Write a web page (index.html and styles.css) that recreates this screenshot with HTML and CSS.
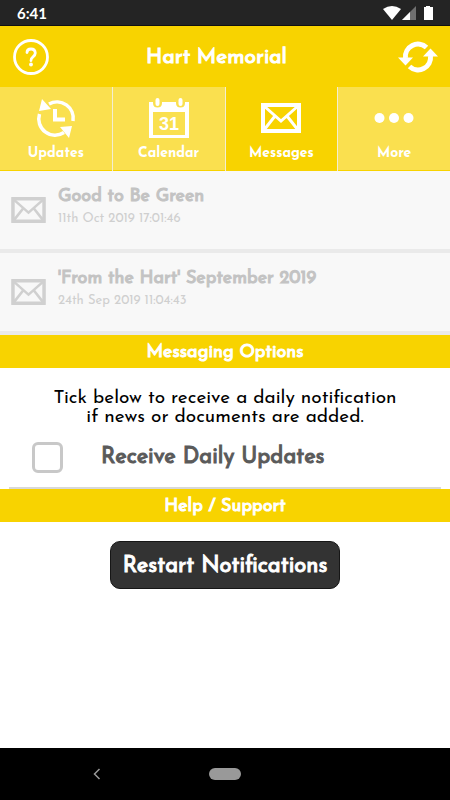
FILE: index.html
```html
<!DOCTYPE html>
<html lang="en">
<head>
<meta charset="utf-8">
<meta name="viewport" content="width=device-width, initial-scale=1">
<title>Hart Memorial</title>
<link rel="stylesheet" href="styles.css">
</head>
<body>
<svg class="defs" aria-hidden="true">
  <symbol id="envelope" viewBox="0 0 40 30">
    <path d="M2 2H38V28H2ZM3 3L20 18L37 3M3 27L14 13M37 27L26 13" fill="none" stroke="currentColor" stroke-width="3"/>
    <path d="M2 2H38V28H2Z" fill="none" stroke="currentColor" stroke-width="4"/>
  </symbol>
</svg>
<div class="status">
  <span>6:41</span>
  <svg class="status-icons" viewBox="0 0 52 16" aria-hidden="true">
    <path d="M0 4Q9-2 18 4L9 15Z" fill="#fff"/>
    <path d="M33 1V15H19Z" fill="#707070"/>
    <path d="M27 7V15H19Z" fill="#fff"/>
    <path d="M41 2H43V1H47V2H50V15H41Z" fill="#fff"/>
  </svg>
</div>
<header class="header">
  <button class="icon-button" aria-label="Help">
    <svg class="help-icon" viewBox="0 0 36 36" fill="none" stroke="#fff">
      <circle cx="18" cy="18" r="16.5" stroke-width="2.8"/>
      <path d="M14 13.500Q14 10 18 10T22.300 14Q22.300 16 20 17.800T18 21.500" stroke-width="2.800" stroke-linecap="round"/>
      <circle cx="18" cy="25.500" r="1.900" fill="#fff" stroke="none"/>
    </svg>
  </button>
  <h1>Hart Memorial</h1>
  <button class="icon-button" aria-label="Refresh">
    <svg class="refresh-icon" viewBox="0 0 40 32">
      <path d="M7.500 17A12.500 12.500 0 0 1 28.500 6.500M32.500 15A12.500 12.500 0 0 1 11.500 25.500" fill="none" stroke="#fff" stroke-width="5"/>
      <path d="M0 16.500H15L7.500 24.500ZM25 15.500H40L32.500 7.500Z" fill="#fff"/>
    </svg>
  </button>
</header>
<nav class="tabs">
  <a class="tab" href="#updates">
    <svg class="tab-icon" viewBox="0 0 40 40" fill="none" stroke="#fff">
      <path d="M13 6A16.300 16.300 0 0 1 37 23M28 34.500A16.300 16.300 0 0 1 3.500 16" stroke-width="3.500"/>
      <path d="M19 11V21.500H29" stroke-width="4"/>
      <path d="M6 1L3 13L15 11ZM36 28L33 40L24 29Z" fill="#fff" stroke="none"/>
    </svg>
    <span>Updates</span>
  </a>
  <a class="tab" href="#calendar">
    <svg class="tab-icon" viewBox="0 0 40 40">
      <path fill="#fff" fill-rule="evenodd" d="M0 4H4V5Q4 9.500 8.500 9.500T13 5V4H27V5Q27 9.500 31.500 9.500T36 5V4H40V40H0ZM4 14V37H36V14Z"/>
      <path d="M8.500 2V6M31.500 2V6" stroke="#fff" stroke-width="4" stroke-linecap="round"/>
      <text class="day" x="20" y="32" text-anchor="middle">31</text>
    </svg>
    <span>Calendar</span>
  </a>
  <a class="tab active" href="#messages" aria-current="page">
    <svg class="tab-icon"><use href="#envelope" x="0" y="5" width="40" height="30"/></svg>
    <span>Messages</span>
  </a>
  <a class="tab" href="#more">
    <svg class="tab-icon" viewBox="0 0 40 40" fill="#fff"><circle cx="5.500" cy="20" r="5"/><circle cx="20" cy="20" r="5"/><circle cx="34.500" cy="20" r="5"/></svg>
    <span>More</span>
  </a>
</nav>
<main>
  <ul class="messages">
    <li class="message">
      <svg class="message-icon" viewBox="0 0 40 30" aria-hidden="true"><use href="#envelope"/></svg>
      <div><h2>Good to Be Green</h2><time>11th Oct 2019 17:01:46</time></div>
    </li>
    <li class="message">
      <svg class="message-icon" viewBox="0 0 40 30" aria-hidden="true"><use href="#envelope"/></svg>
      <div><h2>'From the Hart' September 2019</h2><time>24th Sep 2019 11:04:43</time></div>
    </li>
  </ul>
  <h2 class="bar">Messaging Options</h2>
  <section class="options">
    <p>Tick below to receive a daily notification<br>if news or documents are added.</p>
    <div class="choice">
      <input type="checkbox" id="daily">
      <label for="daily">Receive Daily Updates</label>
    </div>
  </section>
  <h2 class="bar">Help / Support</h2>
  <section class="support">
    <button class="restart">Restart Notifications</button>
  </section>
</main>
<footer class="system-nav">
  <button class="back" aria-label="Back">
    <svg viewBox="0 0 8 12"><path d="M6.500 1L1.500 6L6.500 11" fill="none" stroke="#999" stroke-width="1.500"/></svg>
  </button>
  <button class="home" aria-label="Home"></button>
</footer>
</body>
</html>
```
FILE: styles.css
```css
* { box-sizing: border-box; }

body {
  margin: 0;
  min-height: 100vh;
  display: flex;
  flex-direction: column;
  background: #fff;
  font-family: "Josefin Sans", Lato, sans-serif;
}

h1, h2, p, ul { margin: 0; padding: 0; }
button { padding: 0; border: 0; background: none; font: inherit; color: inherit; }
svg { display: block; }
.defs { display: none; }

/* Headings use the regular cut, thickened by a thin outline */
h1, h2, .choice, .restart {
  font-weight: 400;
  -webkit-text-stroke: 1px currentColor;
}

.status {
  height: 26px;
  padding: 0 15px 0 17px;
  display: flex;
  align-items: center;
  justify-content: space-between;
  background: #242424;
  border-bottom: 1px solid #111;
  color: #fff;
  font: 700 15px Lato, sans-serif;
}
.status-icons { width: 52px; height: 16px; }

.header {
  height: 61px;
  padding: 0 12px 0 13px;
  display: grid;
  grid-template-columns: 40px 1fr 40px;
  align-items: center;
  background: #f8d300;
  color: #fff;
}
.header h1 { padding: 2px 18px 0 0; font-size: 21px; line-height: 28px; text-align: center; }
.help-icon { width: 36px; height: 36px; }
.refresh-icon { width: 40px; height: 32px; }

.tabs {
  display: grid;
  grid-template-columns: repeat(4, 1fr);
  gap: 1px;
  background: #f3eed2;
}
.tab {
  height: 84px;
  padding-top: 11px;
  display: flex;
  flex-direction: column;
  align-items: center;
  gap: 5px;
  background: #fae04f;
  border-bottom: 1px solid #f8d300;
  color: #fff;
  font-size: 14px;
  line-height: 22px;
  font-weight: 700;
  text-decoration: none;
}
.tab.active { background: #f8d300; }
.tab-icon { width: 40px; height: 40px; }
.day { fill: #fff; font: 700 18px "Liberation Sans", sans-serif; }

.messages { list-style: none; }
.message {
  height: 82px;
  padding: 14px 11px 0;
  display: flex;
  gap: 12px;
  background: #f8f8f8;
  border-bottom: 4px solid #eaeaea;
  color: #c3c3c3;
}
.message-icon { width: 35px; height: 26px; margin-top: 12px; color: #d0d0d0; }
.message h2 { font-size: 18px; line-height: 24px; }
.message time { display: block; font-size: 13px; line-height: 20px; color: #cfcfcf; }

.bar {
  height: 33px;
  padding-top: 2px;
  background: #f8d300;
  color: #fff;
  font-size: 18px;
  line-height: 32px;
  text-align: center;
}

.options { padding: 21px 9px 0; }
.options p { color: #000; font-size: 19px; line-height: 19px; text-align: center; }
.choice {
  height: 62px;
  padding-left: 23px;
  display: flex;
  align-items: center;
  gap: 38px;
  border-bottom: 2px solid #d8d8d8;
  color: #5a5a5a;
  font-size: 22px;
}
.choice input {
  appearance: none;
  width: 31px;
  height: 31px;
  margin: 0;
  border: 3px solid #c8c8c8;
  border-radius: 6px;
  background: #fff;
}

.support { padding: 19px 18px; text-align: center; }
.restart {
  height: 48px;
  padding: 2px 12px 0;
  border: 1px solid #161616;
  border-radius: 10px;
  background: #333;
  color: #fff;
  font-size: 22px;
}

.system-nav {
  height: 52px;
  margin-top: auto;
  display: grid;
  grid-template-columns: 43% 14% 43%;
  place-items: center;
  background: #000;
}
.back svg { width: 8px; height: 12px; }
.home { width: 32px; height: 12px; border-radius: 6px; background: #999; }
```
